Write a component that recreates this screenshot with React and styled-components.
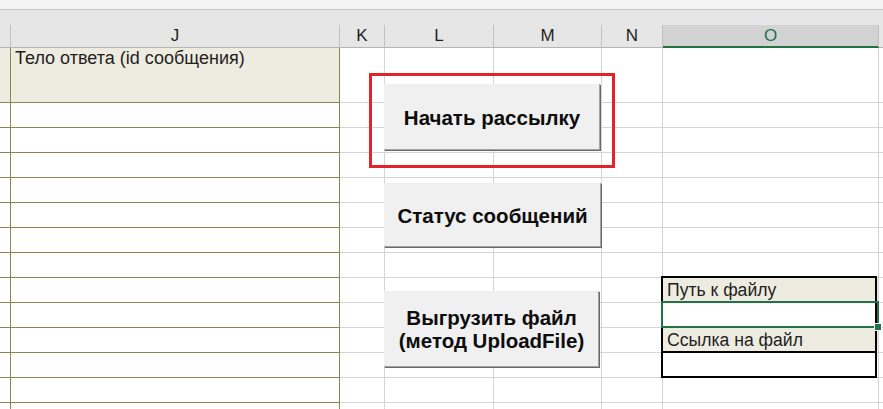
import React from "react";
import styled, { createGlobalStyle, css } from "styled-components";

const GlobalStyle = createGlobalStyle`
  html, body {
    margin: 0;
    padding: 0;
    background: #ffffff;
    overflow: hidden;
  }
  body {
    font-family: "Liberation Sans", Arial, sans-serif;
  }
`;

const GRID_LINE = "#d4d4d4";
const OLIVE = "#8b8551";
const BEIGE = "#eeebe0";
const EXCEL_GREEN = "#217346";

const columns = [
  { key: "I", width: 11, label: "", olive: true },
  { key: "J", width: 329, label: "J", olive: true },
  { key: "K", width: 45, label: "K" },
  { key: "L", width: 109, label: "L" },
  { key: "M", width: 108, label: "M" },
  { key: "N", width: 61, label: "N" },
  { key: "O", width: 216, label: "O", active: true },
  { key: "P", width: 40, label: "" },
];

const template = columns.map((c) => `${c.width}px`).join(" ");

// what sits in each row, keyed by column
const rows = [
  { I: { beige: true }, J: { beige: true, top: true, text: "Тело ответа (id сообщения)" } },
  {}, {}, {}, {}, {}, {}, {},
  { O: { beige: true, boxed: true, text: "Путь к файлу" } },
  { O: { boxed: true } },
  { O: { beige: true, boxed: true, text: "Ссылка на файл" } },
  { O: { boxed: true } },
  {},
  {},
];

const buttons = [
  { id: "send", top: 84, height: 66, width: 216, lines: ["Начать рассылку"] },
  { id: "status", top: 183, height: 64, width: 217, lines: ["Статус сообщений"] },
  { id: "upload", top: 291, height: 76, width: 215, lines: ["Выгрузить файл", "(метод UploadFile)"] },
];

export default function App() {
  return (
    <>
      <GlobalStyle />
      <Sheet>
        <TopStrip />
        <HeaderRow>
          {columns.map((col) => (
            <HeadCell key={col.key} $active={col.active}>
              {col.label}
            </HeadCell>
          ))}
        </HeaderRow>
        <Body>
          {rows.map((row, r) =>
            columns.map((col) => {
              const cell = row[col.key] || {};
              return (
                <Cell
                  key={`${col.key}${r}`}
                  $olive={col.olive}
                  $beige={cell.beige}
                  $top={cell.top}
                  $boxed={cell.boxed}
                >
                  {cell.text}
                </Cell>
              );
            })
          )}
        </Body>

        <Highlight />
        {buttons.map((b) => (
          <FormButton
            key={b.id}
            style={{ top: b.top, height: b.height, width: b.width }}
          >
            {b.lines.map((line) => (
              <span key={line}>{line}</span>
            ))}
          </FormButton>
        ))}
        <Selection>
          <FillHandle />
        </Selection>
      </Sheet>
    </>
  );
}

const Sheet = styled.div`
  position: relative;
  width: 883px;
  height: 409px;
  overflow: hidden;
  background: #ffffff;
`;

const TopStrip = styled.div`
  height: 9px;
  background: #f3f3f3;
  border-bottom: 1px solid #c6c6c6;
`;

const HeaderRow = styled.div`
  display: grid;
  grid-template-columns: ${template};
  align-items: end;
  height: 38px;
  padding-top: 15px;
  box-sizing: border-box;
  background: #e6e6e6;
`;

const HeadCell = styled.div`
  height: 23px;
  box-sizing: border-box;
  display: flex;
  align-items: center;
  justify-content: center;
  font-size: 17px;
  color: #1e1e1e;
  border-right: 1px solid #c2c2c2;
  border-bottom: 1px solid #b4b4b4;
  white-space: nowrap;
  overflow: hidden;
  ${(p) =>
    p.$active &&
    css`
      background: #d2d2d2;
      color: ${EXCEL_GREEN};
      border-bottom: 2px solid ${EXCEL_GREEN};
    `}
`;

const Body = styled.div`
  display: grid;
  grid-template-columns: ${template};
  grid-template-rows: 55px;
  grid-auto-rows: 25px;
`;

const Cell = styled.div`
  box-sizing: border-box;
  display: flex;
  align-items: ${(p) => (p.$top ? "flex-start" : "flex-end")};
  padding: ${(p) => (p.$top ? "1px 4px 0" : "0 4px 2px")};
  font-size: ${(p) => (p.$top ? "18px" : "17.6px")};
  line-height: 19px;
  color: #1f1f1f;
  white-space: nowrap;
  overflow: visible;
  background: ${(p) => (p.$beige ? BEIGE : "transparent")};
  border-right: 1px solid ${(p) => (p.$olive ? OLIVE : GRID_LINE)};
  border-bottom: 1px solid ${(p) => (p.$olive ? OLIVE : GRID_LINE)};
  ${(p) =>
    p.$boxed &&
    css`
      position: relative;
      &::after {
        content: "";
        position: absolute;
        top: -2px;
        left: -2px;
        right: 1px;
        bottom: -1px;
        border: 2px solid #000000;
        pointer-events: none;
        z-index: 1;
      }
    `}
`;

const Highlight = styled.div`
  position: absolute;
  left: 369px;
  top: 73px;
  width: 246px;
  height: 95px;
  box-sizing: border-box;
  border: 3px solid #e3222a;
  z-index: 2;
`;

const FormButton = styled.div`
  position: absolute;
  left: 384px;
  box-sizing: border-box;
  display: flex;
  flex-direction: column;
  align-items: center;
  justify-content: center;
  background: #f0f0f0;
  box-shadow: inset -1px -1px 0 #a3a3a3, 1px 1px 0 #686868;
  font-size: 20.5px;
  font-weight: bold;
  line-height: 23px;
  color: #0d0d0d;
  white-space: nowrap;
  z-index: 3;
`;

const Selection = styled.div`
  position: absolute;
  left: 661px;
  top: 301px;
  width: 218px;
  height: 27px;
  box-sizing: border-box;
  border: 2px solid ${EXCEL_GREEN};
  z-index: 4;
`;

const FillHandle = styled.div`
  position: absolute;
  right: -4px;
  bottom: -4px;
  width: 6px;
  height: 6px;
  background: ${EXCEL_GREEN};
  outline: 1px solid #ffffff;
`;
